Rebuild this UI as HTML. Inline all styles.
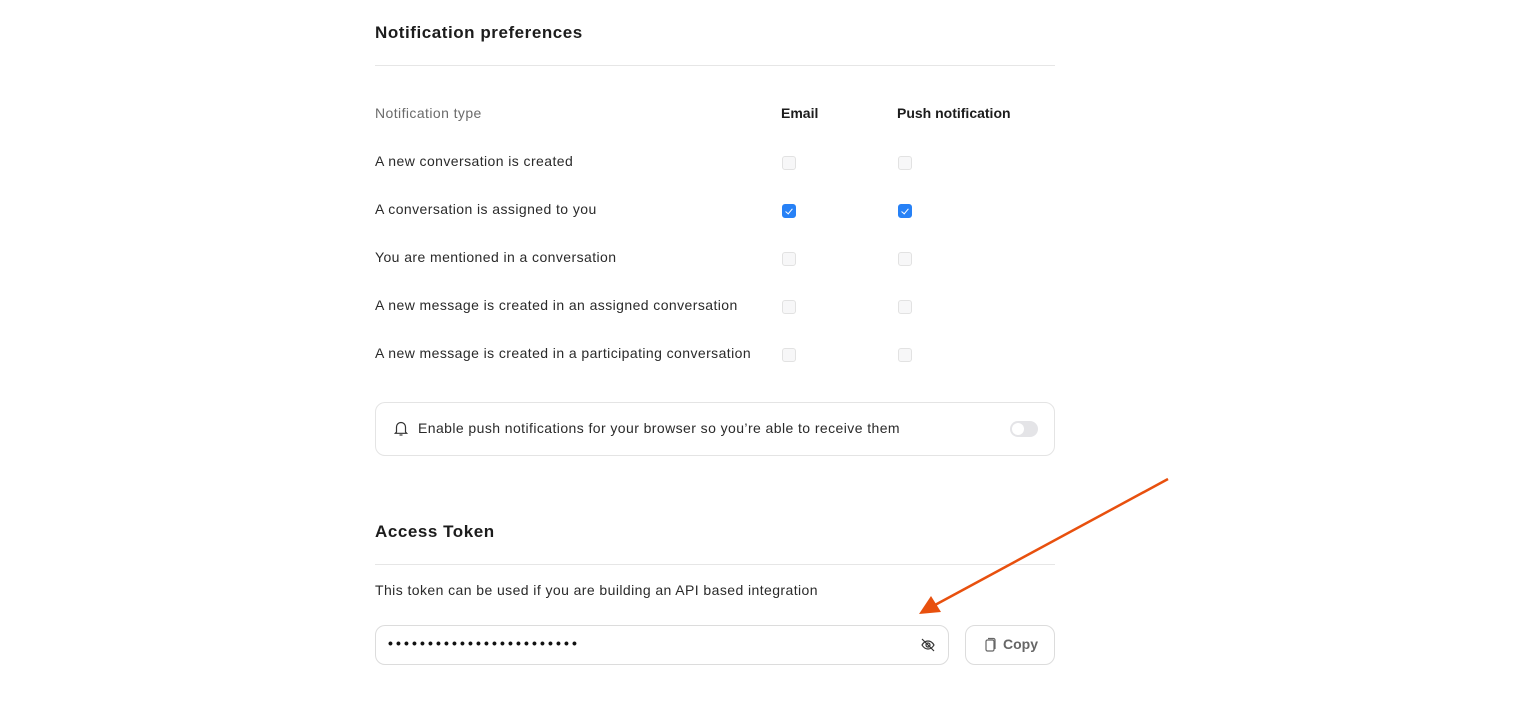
<!DOCTYPE html>
<html><head><meta charset="utf-8"><style>
body{margin:0;background:#fff;font-family:"Liberation Sans",sans-serif;color:#1f1f1f;width:1519px;height:704px;position:relative;overflow:hidden}
.a{position:absolute}
h2{position:absolute;margin:0;font-size:17px;font-weight:600;color:#1c1c1c;letter-spacing:0.55px}
.t{position:absolute;font-size:14px;color:#2a2a2a;letter-spacing:0.42px}
.hr{position:absolute;left:375px;width:680px;height:1px;background:#e6e6e6}
.cb{position:absolute;width:14px;height:14px;border:1px solid #e2e2e2;border-radius:3px;background:#f7f7f8;box-sizing:border-box}
.cb.on{background:#2781f6;border-color:#2781f6}
.cb.on::after{content:"";position:absolute;left:4px;top:1.5px;width:3px;height:6px;border:solid #fff;border-width:0 1.6px 1.6px 0;transform:rotate(40deg)}
</style></head><body>
<h2 style="left:375px;top:23px">Notification preferences</h2>
<div class="hr" style="top:65px"></div>
<div class="t" style="left:375px;top:105px;color:#6b6b6b">Notification type</div>
<div class="t" style="left:781px;top:105px;font-weight:600;color:#1c1c1c;letter-spacing:0">Email</div>
<div class="t" style="left:897px;top:105px;font-weight:600;color:#1c1c1c;letter-spacing:0">Push notification</div>

<div class="t" style="left:375px;top:153px">A new conversation is created</div>
<div class="cb" style="left:782px;top:156px"></div><div class="cb" style="left:898px;top:156px"></div>
<div class="t" style="left:375px;top:201px">A conversation is assigned to you</div>
<div class="cb on" style="left:782px;top:204px"></div><div class="cb on" style="left:898px;top:204px"></div>
<div class="t" style="left:375px;top:249px">You are mentioned in a conversation</div>
<div class="cb" style="left:782px;top:252px"></div><div class="cb" style="left:898px;top:252px"></div>
<div class="t" style="left:375px;top:297px">A new message is created in an assigned conversation</div>
<div class="cb" style="left:782px;top:300px"></div><div class="cb" style="left:898px;top:300px"></div>
<div class="t" style="left:375px;top:345px">A new message is created in a participating conversation</div>
<div class="cb" style="left:782px;top:348px"></div><div class="cb" style="left:898px;top:348px"></div>

<div class="a" style="left:375px;top:402px;width:680px;height:54px;border:1px solid #e4e4e4;border-radius:10px;box-sizing:border-box"></div>
<svg class="a" style="left:393px;top:420px" width="16" height="17" viewBox="0 0 16 17" fill="none" stroke="#333" stroke-width="1.2"><path d="M3.5 12V7a4.5 4.5 0 0 1 9 0v5l1.2 1.3H2.3z"/><path d="M6.5 15h3"/></svg>
<div class="t" style="left:418px;top:420px">Enable push notifications for your browser so you’re able to receive them</div>
<div class="a" style="left:1010px;top:421px;width:28px;height:16px;border-radius:8px;background:#e4e4e7"><div class="a" style="left:2px;top:2px;width:12px;height:12px;border-radius:6px;background:#fff"></div></div>

<h2 style="left:375px;top:522px">Access Token</h2>
<div class="hr" style="top:564px"></div>
<div class="t" style="left:375px;top:582px">This token can be used if you are building an API based integration</div>
<div class="a" style="left:375px;top:625px;width:574px;height:40px;border:1px solid #dcdcdc;border-radius:10px;box-sizing:border-box"></div>
<div class="a" style="left:388px;top:635px;font-size:14px;letter-spacing:3.1px;color:#111;font-weight:bold">••••••••••••••••••••••••</div>
<svg class="a" style="left:920px;top:637px" width="16" height="16" viewBox="0 0 16 16" fill="none" stroke="#333" stroke-width="1.2"><path d="M2 8c1.5-2.5 3.5-4 6-4s4.5 1.5 6 4c-1.5 2.5-3.5 4-6 4S3.5 10.5 2 8z"/><circle cx="8" cy="8" r="2"/><path d="M2 2l12 12"/></svg>
<div class="a" style="left:965px;top:625px;width:90px;height:40px;border:1px solid #dcdcdc;border-radius:10px;box-sizing:border-box"></div>
<svg class="a" style="left:983px;top:637px" width="14" height="16" viewBox="0 0 14 16" fill="none" stroke="#666" stroke-width="1.2"><rect x="3" y="3" width="8" height="11" rx="1.5"/><path d="M5 1.5h5.5a1.5 1.5 0 0 1 1.5 1.5v9"/></svg>
<div class="t" style="left:1003px;top:636px;color:#666;font-weight:600;letter-spacing:0">Copy</div>

<svg class="a" style="left:0;top:0" width="1519" height="704"><line x1="1168" y1="479" x2="935" y2="605" stroke="#e8500e" stroke-width="2.5"/><polygon points="919,614 931,596 941,612" fill="#e8500e"/></svg>
</body></html>
